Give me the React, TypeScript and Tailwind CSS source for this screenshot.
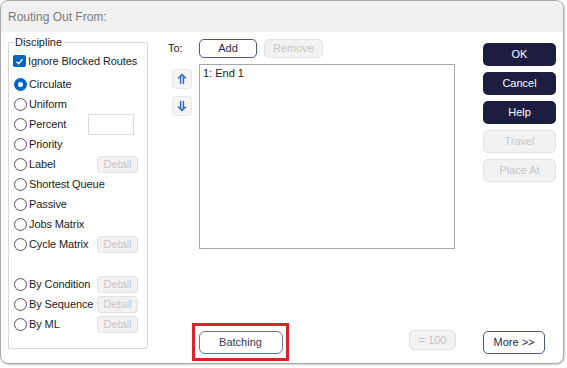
import React from "react";

const font = { fontFamily: '"Liberation Sans", Arial, sans-serif' };

function Radio({ checked }: { checked?: boolean }) {
  return checked ? (
    <span className="ml-[1px] flex h-[13px] w-[13px] shrink-0 items-center justify-center rounded-full bg-[#0067c0]">
      <span className="h-[5px] w-[5px] rounded-full bg-white" />
    </span>
  ) : (
    <span className="ml-[1px] h-[13px] w-[13px] shrink-0 rounded-full border border-[#555] bg-white" />
  );
}

function SmallBtn({ label }: { label: string }) {
  return (
    <span className="ml-auto mr-[9px] flex h-[17px] w-[41px] items-center justify-center rounded-[4px] border border-[#e0e0e0] bg-[#f1f1f1] text-[11px] text-[#c6c6c6]">
      {label}
    </span>
  );
}

function Row({
  label,
  checked,
  detail,
  input,
}: {
  label: string;
  checked?: boolean;
  detail?: boolean;
  input?: boolean;
}) {
  return (
    <div className="flex h-[20px] items-center">
      <Radio checked={checked} />
      <span className="ml-[2px] whitespace-nowrap text-[11px] tracking-[-0.1px] text-[#1b1b1b]">{label}</span>
      {detail && <SmallBtn label="Detail" />}
      {input && (
        <span className="ml-auto mr-[13px] h-[21px] w-[46px] border border-[#dcdcdc] bg-white" />
      )}
    </div>
  );
}

function DarkBtn({ label }: { label: string }) {
  return (
    <button className="flex h-[23px] w-[73px] items-center justify-center rounded-[5px] bg-[#1c1d40] text-[11px] text-white">
      {label}
    </button>
  );
}

function OffBtn({ label, w = "w-[73px]", h = "h-[23px]" }: { label: string; w?: string; h?: string }) {
  return (
    <button
      className={`flex ${h} ${w} items-center justify-center rounded-[5px] border border-[#e2e2e2] bg-[#f2f2f2] text-[11px] text-[#c6c6c6]`}
    >
      {label}
    </button>
  );
}

function ArrowBtn({ down }: { down?: boolean }) {
  return (
    <span className="flex h-[20px] w-[20px] items-center justify-center rounded-[4px] border border-[#e6e6e6] bg-[#f5f5f5]">
      <svg width="12" height="12" viewBox="0 0 12 12" fill="none" stroke="#2d6cc0" strokeWidth="1.5" strokeLinecap="round">
        {down ? (
          <>
            <path d="M2.5 7 L6 10.5 L9.5 7" />
            <path d="M4.6 1.5 V8.5 M7.4 1.5 V8.5" />
          </>
        ) : (
          <>
            <path d="M2.5 5 L6 1.5 L9.5 5" />
            <path d="M4.6 3.5 V10.5 M7.4 3.5 V10.5" />
          </>
        )}
      </svg>
    </span>
  );
}

export default function App() {
  return (
    <div className="h-[368px] w-[567px] bg-white" style={font}>
      <div className="flex h-[364px] w-[564px] flex-col overflow-hidden rounded-[8px] border border-[#a9a9a9] bg-white shadow-[1px_1px_2px_rgba(0,0,0,0.2)]">
        <div className="flex h-[31px] shrink-0 items-center bg-[#f0f0f0] pl-[7px] text-[12px] text-[#7b7b7b]">
          Routing Out From:
        </div>

        <div className="flex flex-1 pl-[7px]">
          <fieldset className="mt-[4px] h-[313px] w-[140px] shrink-0 rounded-[2px] border border-[#d7d7d7] pl-[4px]">
            <legend className="ml-[1px] px-[1px] text-[11px] leading-[13px] text-[#1b1b1b]">Discipline</legend>
            <div className="mt-[2px] flex h-[20px] items-center">
              <span className="flex h-[12px] w-[13px] items-center justify-center rounded-[2px] bg-[#0067c0]">
                <svg width="9" height="9" viewBox="0 0 9 9" fill="none" stroke="#fff" strokeWidth="1.3">
                  <path d="M1.5 4.8 L3.6 6.8 L7.6 2.2" />
                </svg>
              </span>
              <span className="ml-[2px] whitespace-nowrap text-[11px] tracking-[-0.1px] text-[#1b1b1b]">Ignore Blocked Routes</span>
            </div>
            <div className="mt-[3px] flex flex-col">
              <Row label="Circulate" checked />
              <Row label="Uniform" />
              <Row label="Percent" input />
              <Row label="Priority" />
              <Row label="Label" detail />
              <Row label="Shortest Queue" />
              <Row label="Passive" />
              <Row label="Jobs Matrix" />
              <Row label="Cycle Matrix" detail />
              <div className="h-[20px]" />
              <Row label="By Condition" detail />
              <Row label="By Sequence" detail />
              <Row label="By ML" detail />
            </div>
          </fieldset>

          <div className="flex flex-1 flex-col">
            <div className="flex">
              <div className="ml-[20px] flex w-[287px] flex-col">
                <div className="mt-[7px] flex h-[19px] items-center">
                  <span className="w-[31px] text-[11px] text-[#1b1b1b]">To:</span>
                  <button className="flex h-[19px] w-[58px] items-center justify-center rounded-[5px] border-[1.5px] border-[#4f546f] bg-white text-[11px] text-[#272b48]">
                    Add
                  </button>
                  <span className="ml-[7px]">
                    <OffBtn label="Remove" w="w-[59px]" h="h-[19px]" />
                  </span>
                </div>
                <div className="mt-[6px] flex">
                  <div className="ml-[4px] mt-[5px] flex w-[27px] flex-col gap-[7px]">
                    <ArrowBtn />
                    <ArrowBtn down />
                  </div>
                  <div className="h-[185px] w-[256px] border border-[#a6a6ae] bg-white px-[3px] text-[11px] text-[#1b1b1b]">
                    1: End 1
                  </div>
                </div>
              </div>
              <div className="ml-[28px] mt-[11px] flex flex-col gap-[6px]">
                <DarkBtn label="OK" />
                <DarkBtn label="Cancel" />
                <DarkBtn label="Help" />
                <OffBtn label="Travel" />
                <OffBtn label="Place At" />
              </div>
            </div>

            <div className="mt-[74px] flex items-start">
              <div className="ml-[44px] flex h-[38px] w-[97px] items-center justify-center border-[3px] border-[#e1202b]">
                <button className="flex h-[23px] w-[84px] items-center justify-center rounded-[6px] border-[1.5px] border-[#6e7288] bg-white text-[11px] text-[#353954]">
                  Batching
                </button>
              </div>
              <span className="ml-[120px] mt-[7px]">
                <OffBtn label="= 100" w="w-[47px]" h="h-[20px]" />
              </span>
              <button className="ml-[27px] mt-[8px] flex h-[23px] w-[62px] items-center justify-center rounded-[5px] border-[1.5px] border-[#4f546f] bg-white text-[11px] text-[#272b48]">
                More &gt;&gt;
              </button>
            </div>
          </div>
        </div>
      </div>
    </div>
  );
}
